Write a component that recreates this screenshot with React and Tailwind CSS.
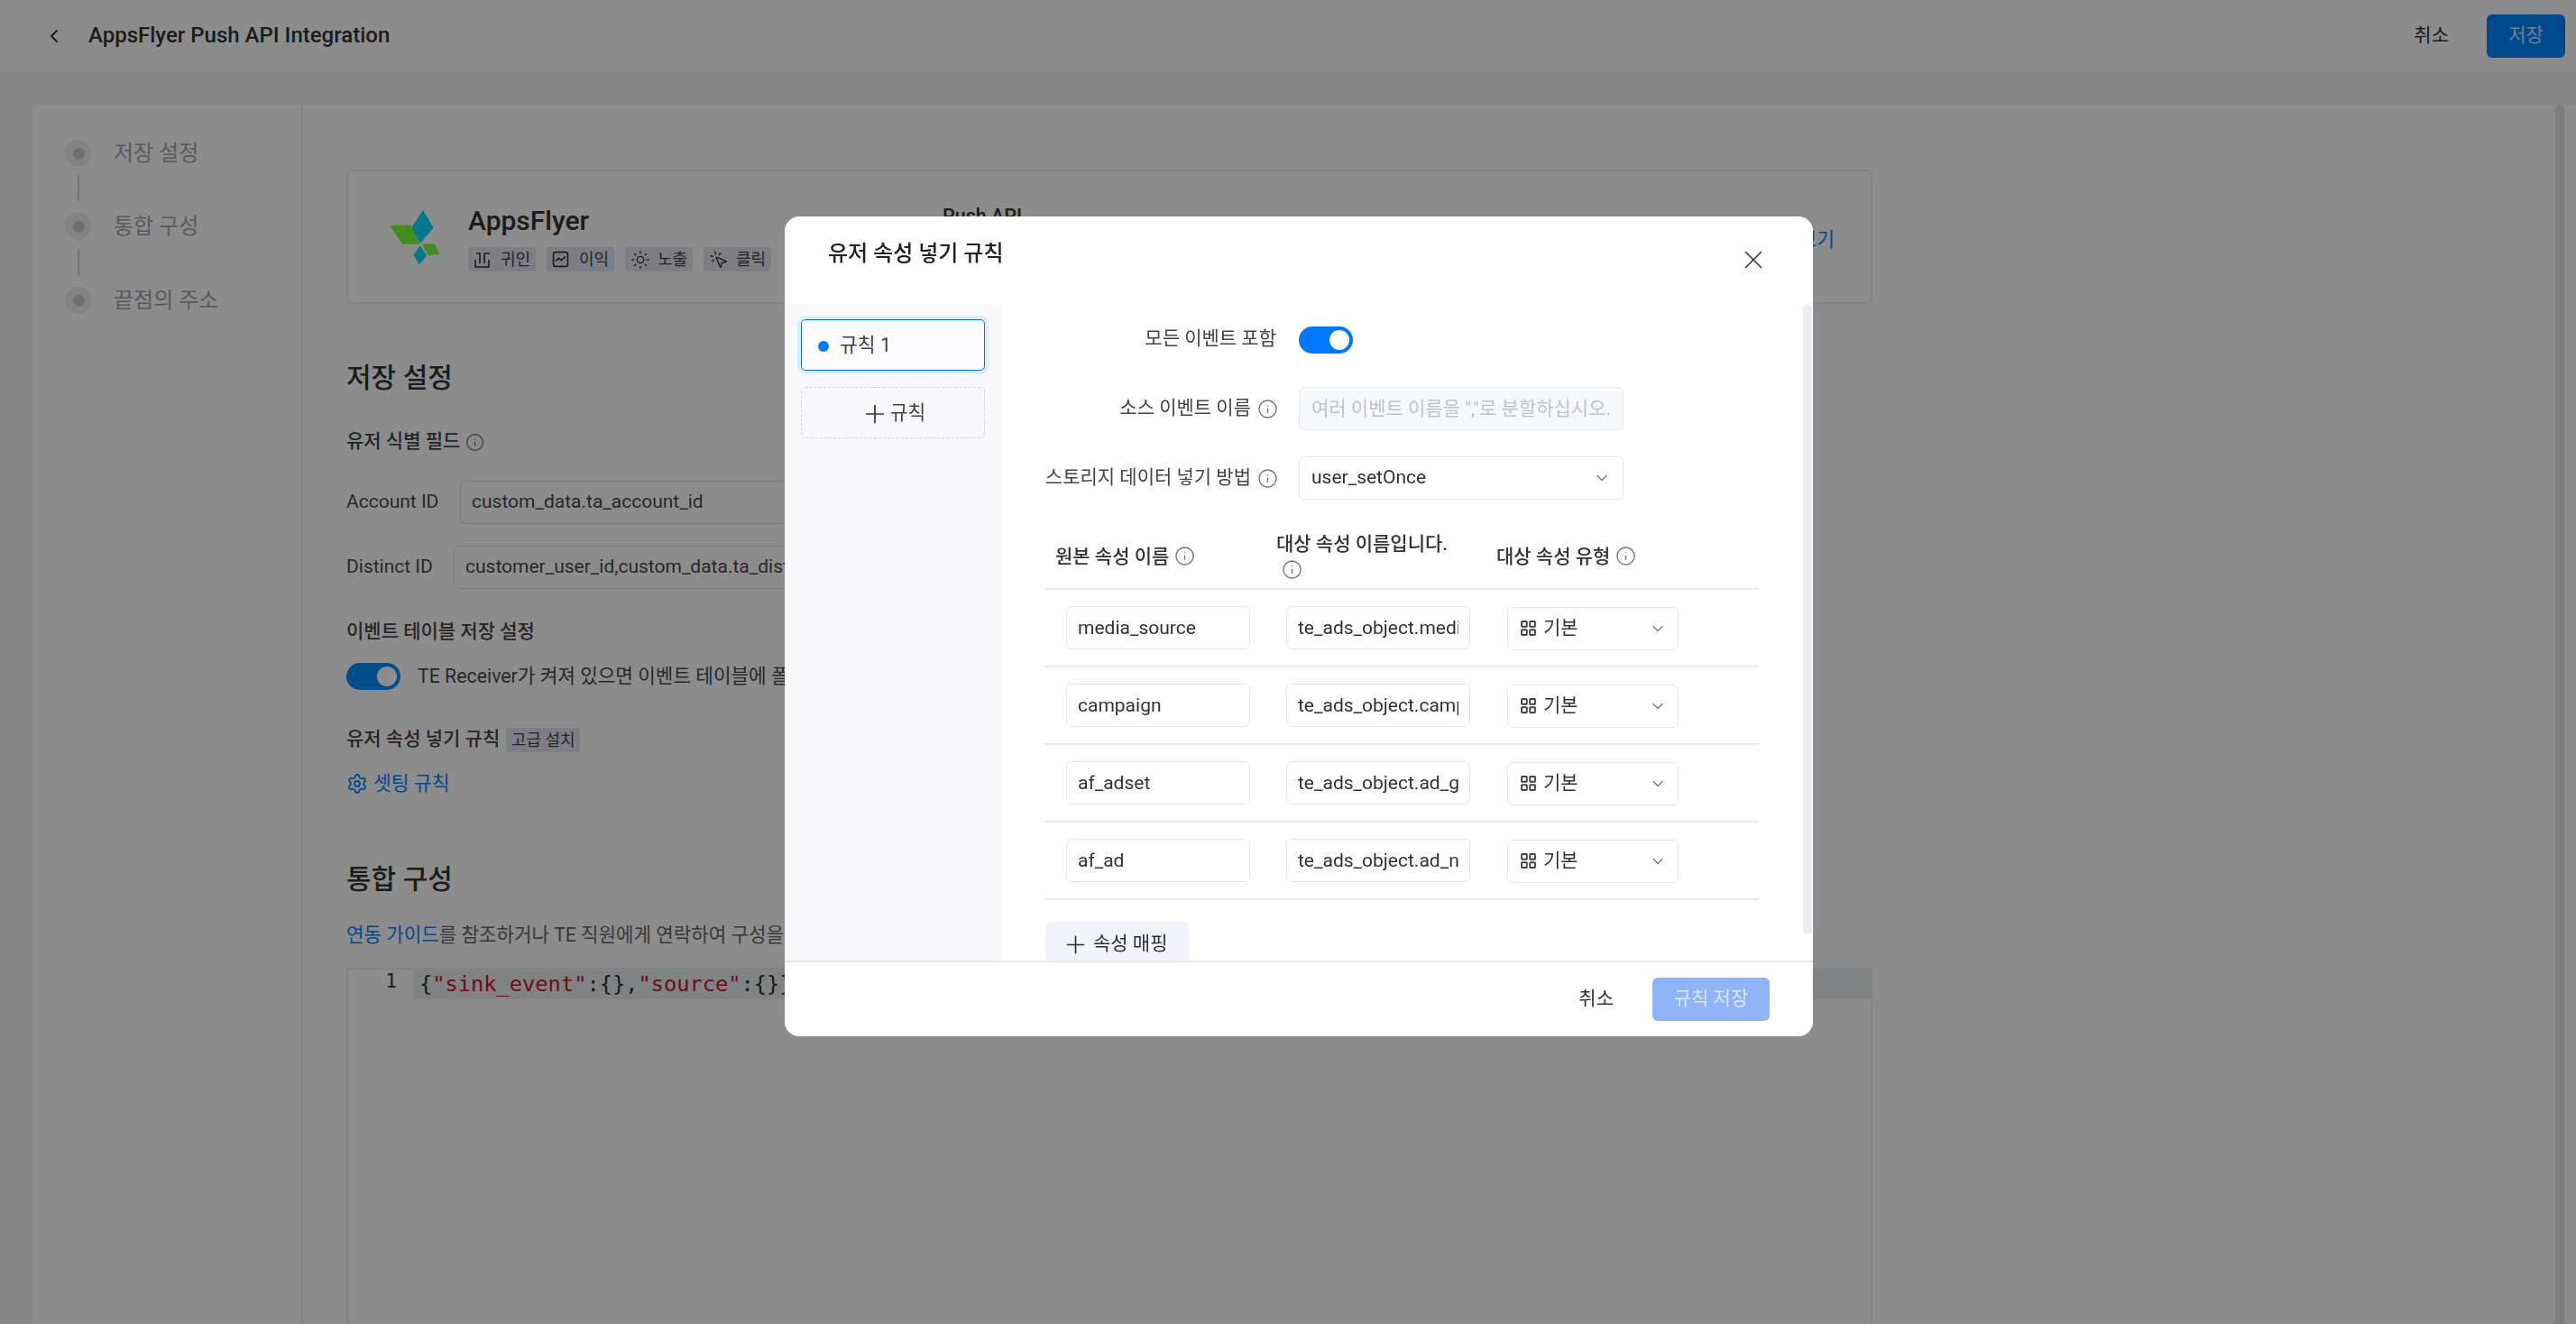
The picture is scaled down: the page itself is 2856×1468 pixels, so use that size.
import React from 'react';
import { ChevronLeft, ChevronDown, Info, Plus, X, Settings, Sun, MousePointerClick } from 'lucide-react';

const InfoIcon = ({ className = '', size = 23 }) => <Info size={size} strokeWidth={1.5} className={`shrink-0 text-[#777] ${className}`} />;

const Toggle = ({ color }) => (
  <div className={`flex items-center justify-end w-[60px] h-[30px] rounded-full pr-1 shrink-0 ${color}`}>
    <div className="w-[22px] h-[22px] rounded-full bg-white" />
  </div>
);

const Step = ({ label }) => (
  <div className="flex items-center h-[30px]">
    <div className="w-[30px] h-[30px] rounded-full bg-[#ecf0f3] flex items-center justify-center shrink-0">
      <div className="w-[13px] h-[13px] rounded-full bg-[#c6cace]" />
    </div>
    <span className="ml-[24px] text-[24px] text-[#a2a5ab] whitespace-nowrap">{label}</span>
  </div>
);

const Tag = ({ icon, label }) => (
  <div className="flex items-center h-[27px] w-[75px] rounded-[3px] bg-[#e4e8f0] pl-[6px] text-[18px] text-[#444]">
    <span className="w-[23px] h-[22px] flex items-center shrink-0">{icon}</span>
    <span className="ml-[7px] whitespace-nowrap">{label}</span>
  </div>
);

const Field = ({ label, value, indent }) => (
  <div className="flex items-center h-[48px]">
    <span className={`${indent} shrink-0 text-[21px] text-[#4a4a4a]`}>{label}</span>
    <div className="ml-0 w-[600px] h-[48px] rounded-[6px] border border-[#e0e2e6] pl-[12px] flex items-center text-[21px] text-[#4a4a4a] whitespace-nowrap overflow-hidden">{value}</div>
  </div>
);

const ModalInput = ({ value, width }) => (
  <input readOnly value={value} className={`${width} h-[48px] rounded-[6px] border border-[#e6e7ea] bg-white px-[12px] text-[21px] text-[#333] outline-none`} />
);

const TypeSelect = () => (
  <div className="mt-[1px] flex items-center w-[190px] h-[48px] rounded-[6px] border border-[#e6e7ea] bg-white pl-[14px] pr-[12px] text-[21px] text-[#333]">
    <svg width="17" height="17" viewBox="0 0 16 16" fill="none" stroke="#444" strokeWidth="1.8" className="shrink-0">
      <rect x="1" y="1" width="5.4" height="5.4" rx="0.6" />
      <rect x="9.6" y="1" width="5.4" height="5.4" rx="0.6" />
      <rect x="1" y="9.6" width="5.4" height="5.4" rx="0.6" />
      <rect x="9.6" y="9.6" width="5.4" height="5.4" rx="0.6" />
    </svg>
    <span className="ml-[8px]">기본</span>
    <ChevronDown size={20} strokeWidth={1.5} className="ml-auto text-[#777]" />
  </div>
);

const rows = [
  ['media_source', 'te_ads_object.media_source'],
  ['campaign', 'te_ads_object.campaign'],
  ['af_adset', 'te_ads_object.ad_group_name'],
  ['af_ad', 'te_ads_object.ad_name'],
];

const Modal = () => (
  <div className="fixed left-[870px] top-[240px] w-[1140px] h-[909px] bg-white rounded-[16px] flex flex-col overflow-hidden">
    <div className="h-[97px] shrink-0 flex justify-between pl-[48px] pr-[49px]">
      <span className="mt-[22px] text-[24px] leading-[38px] font-medium text-[#222]">유저 속성 넣기 규칙</span>
      <X size={34} strokeWidth={1.1} className="mt-[31px] text-[#333]" />
    </div>
    <div className="relative flex-1 flex min-h-0">
      <div className="w-[240px] shrink-0 bg-[#f9f9fb] rounded-tr-[6px] pt-[17px] px-[18px]">
        <div className="flex items-center h-[57px] rounded-[5px] border-[1.5px] border-[#0a6fdc] bg-[#fbfbfd] ring-4 ring-[#dcecff] pl-[18px] pt-[2px] text-[21.5px] text-[#444]">
          <span className="w-[12px] h-[12px] rounded-full bg-[#0077ff]" />
          <span className="ml-[12px]">규칙 1</span>
        </div>
        <div className="mt-[18px] flex items-center justify-center h-[57px] rounded-[5px] border border-dashed border-[#d4d5da] pt-[2px] text-[21.5px] text-[#444]">
          <Plus size={32} strokeWidth={1.3} className="text-[#333]" />
          <span className="ml-[1px]">규칙</span>
        </div>
      </div>
      <div className="flex-1 min-w-0 overflow-hidden pt-[25px] pl-[49px]">
        <div className="flex h-[30px]">
          <div className="w-[256px] flex items-center justify-end text-[21px] text-[#444] leading-[26px] pb-[4px]">모든 이벤트 포함</div>
          <div className="ml-[25px]"><Toggle color="bg-[#0077ff]" /></div>
        </div>
        <div className="mt-[37px] flex h-[48px]">
          <div className="w-[256px] flex items-center justify-end text-[21px] text-[#444]"><span>소스 이벤트 이름</span><InfoIcon className="ml-[7px] mr-[-2px]" /></div>
          <input disabled placeholder={'여러 이벤트 이름을 ","로 분할하십시오.'} className="ml-[25px] w-[360px] h-[48px] rounded-[6px] border border-[#ebecef] bg-[#f7f8fa] px-[13px] text-[21px] placeholder:text-[#c0c2c7]" />
        </div>
        <div className="mt-[29px] flex h-[48px]">
          <div className="w-[256px] flex items-center justify-end text-[21px] text-[#444] whitespace-nowrap"><span>스토리지 데이터 넣기 방법</span><InfoIcon className="ml-[7px] mr-[-2px]" /></div>
          <div className="ml-[25px] w-[360px] h-[48px] rounded-[6px] border border-[#e6e7ea] pl-[13px] pr-[13px] flex items-center text-[21px] text-[#333]">
            <span>user_setOnce</span>
            <ChevronDown size={20} strokeWidth={1.5} className="ml-auto text-[#777]" />
          </div>
        </div>
        <div className="mt-[27px] w-[791px] grid grid-cols-[245px_244px_1fr] h-[73px] border-b-2 border-[#e8e9ec] font-medium text-[21px] text-[#333] leading-[28px]">
          <div className="pl-[11px] flex items-center"><span>원본 속성 이름</span><InfoIcon className="ml-[6px]" /></div>
          <div className="pl-[11px] pt-[8px]">
            <div className="whitespace-nowrap">대상 속성 이름입니다.</div>
            <div className="pl-[6px] h-[28px] flex items-center"><InfoIcon /></div>
          </div>
          <div className="pl-[11px] flex items-center"><span>대상 속성 유형</span><InfoIcon className="ml-[6px]" /></div>
        </div>
        {rows.map(([a, b]) => (
          <div key={a} className="w-[791px] grid grid-cols-[245px_244px_1fr] h-[86px] border-b-2 border-[#e8e9ec] items-center">
            <div className="pl-[23px]"><ModalInput value={a} width="w-[204px]" /></div>
            <div className="pl-[22px]"><ModalInput value={b} width="w-[204px]" /></div>
            <div className="pl-[23px]"><TypeSelect /></div>
          </div>
        ))}
        <div className="mt-[24px] w-[159px] h-[50px] rounded-t-[6px] bg-[#f2f3f8] flex items-center pl-[18px] text-[#2b2d42] text-[21px] whitespace-nowrap">
          <Plus size={31} strokeWidth={1.3} />
          <span className="ml-[4px]">속성 매핑</span>
        </div>
      </div>
      <div className="absolute right-[1px] top-0 w-[10px] h-[699px] rounded-full bg-[#ecedf1]" />
    </div>
    <div className="h-[84px] shrink-0 border-t-2 border-[#e8e9ec] flex items-center justify-end pr-[48px]">
      <span className="text-[21px] text-[#333]">취소</span>
      <div className="ml-[43px] w-[130px] h-[48px] rounded-[6px] bg-[#8fb4f8] flex items-center justify-center text-[21px] text-[#dce8ff]">규칙 저장</div>
    </div>
  </div>
);

export default function App() {
  return (
    <div className="relative h-[1468px] w-[2856px] overflow-hidden bg-[#f2f2f3] font-[Roboto,'Noto_Sans_CJK_KR',sans-serif]">
      <header className="h-20 bg-white flex items-center pl-[48px] pr-3">
        <ChevronLeft size={24} strokeWidth={2} className="text-[#333]" />
        <span className="ml-[26px] pb-[2px] text-[24px] font-medium text-[#333]">AppsFlyer Push API Integration</span>
        <span className="ml-auto text-[21px] text-[#333]">취소</span>
        <div className="ml-[42px] w-[87px] h-[48px] rounded-[6px] bg-[#0086ff] flex items-center justify-center text-[21px] text-[#cde4ff]">저장</div>
      </header>
      <main className="mt-9 ml-9 flex bg-white h-[1352px]">
        <aside className="w-[300px] shrink-0 border-r-2 border-[#eceef0] pt-[39px] pl-9">
          <Step label="저장 설정" />
          <div className="ml-[14px] w-[2px] h-[29px] mt-[9px] mb-[13px] bg-[#d4d6da]" />
          <Step label="통합 구성" />
          <div className="ml-[14px] w-[2px] h-[30px] mt-[10px] mb-[12px] bg-[#d4d6da]" />
          <Step label="끝점의 주소" />
        </aside>
        <section className="pl-[48px] w-[1740px] shrink-0 pt-[72px]">
          <div className="h-[149px] rounded-[6px] border-2 border-[#eceef0] flex">
            <svg width="60" height="66" viewBox="0 0 60 66" className="ml-[44px] mt-[40px] shrink-0">
              <polygon points="39,2.7 50.7,22.7 35.7,40 26,22.7" fill="#07dfff" />
              <polygon points="2.3,20 25,19.3 35,40.7 16,40.7" fill="#7fff38" />
              <polygon points="37.7,40.7 51.7,40 57.7,52.3 45,53.3" fill="#7fff38" />
              <polygon points="35.7,42.3 43.3,53.3 35,63.3 28.3,52.7" fill="#07dfff" />
            </svg>
            <div className="ml-[29px] w-[526px] shrink-0 pt-[36px]">
              <div className="text-[30px] leading-[38px] font-medium text-[#333]">AppsFlyer</div>
              <div className="mt-[10px] flex gap-3">
                <Tag label="귀인" icon={<svg width="20" height="20" viewBox="0 0 20 20" fill="none" stroke="#333" strokeWidth="1.6"><path d="M2 10v8h15v-8M7 14V3H3M12 14V3h6" /></svg>} />
                <Tag label="이익" icon={<svg width="19" height="19" viewBox="0 0 18 18" fill="none" stroke="#333" strokeWidth="1.6"><rect x="1.5" y="1.5" width="15" height="15" rx="2" /><path d="M4 11l3-3 3 2 4-4" /></svg>} />
                <Tag label="노출" icon={<Sun size={22} strokeWidth={1.5} color="#333" />} />
                <Tag label="클릭" icon={<MousePointerClick size={22} strokeWidth={1.5} color="#333" />} />
              </div>
            </div>
            <div className="pt-[34px] text-[21.5px] font-medium text-[#333]">Push API</div>
            <div className="ml-auto pr-[40px] pt-[60px] text-[21.5px] text-[#0a84ff] whitespace-nowrap">가이드 보기</div>
          </div>
          <h2 className="mt-[62px] text-[30px] leading-[40px] font-medium text-[#333]">저장 설정</h2>
          <div className="mt-[37px] h-[28px] flex items-center text-[21px] font-medium text-[#444]"><span>유저 식별 필드</span><InfoIcon size={21} className="ml-[6px] text-[#666]" /></div>
          <div className="mt-[29px]"><Field label="Account ID" value="custom_data.ta_account_id" indent="w-[126px]" /></div>
          <div className="mt-[24px]"><Field label="Distinct ID" value="customer_user_id,custom_data.ta_distinct_id" indent="w-[119px]" /></div>
          <div className="mt-[34px] h-[28px] flex items-center text-[21px] font-medium text-[#444]">이벤트 테이블 저장 설정</div>
          <div className="mt-[20px] flex items-center h-[30px]">
            <Toggle color="bg-[#0091ff]" />
            <span className="ml-[19px] text-[21.3px] text-[#4a4a4a] whitespace-nowrap">TE Receiver가 켜져 있으면 이벤트 테이블에 폴더를 저장합니다</span>
          </div>
          <div className="mt-[41px] h-[28px] flex items-center text-[21px] font-medium text-[#444]">
            <span>유저 속성 넣기 규칙</span>
            <span className="ml-[7px] h-[27px] w-[82px] rounded-[3px] bg-[#e4e8f0] flex items-center justify-center text-[18px] font-normal text-[#444]">고급 설치</span>
          </div>
          <div className="mt-[21px] h-[28px] flex items-center text-[21.5px] text-[#0a84ff]">
            <Settings size={24} strokeWidth={1.8} />
            <span className="ml-[6px]">셋팅 규칙</span>
          </div>
          <h2 className="mt-[72px] text-[30px] leading-[40px] font-medium text-[#333]">통합 구성</h2>
          <p className="mt-[28px] leading-[28px] text-[21.2px] text-[#666] whitespace-nowrap"><span className="text-[#0a84ff]">연동 가이드</span>를 참조하거나 TE 직원에게 연락하여 구성을 완료하세요</p>
          <div className="mt-[22px] h-[420px] border-2 border-[#eceef0] flex">
            <div className="w-[72px] h-[33px] shrink-0 flex justify-end pr-[18px] font-['DejaVu_Sans_Mono',monospace] text-[21px] text-[#333] leading-[26px]">1</div>
            <div className="flex-1 h-[33px] bg-[#e9eef0] pl-[7px] font-['DejaVu_Sans_Mono',monospace] text-[23.7px] leading-[33px] text-[#333] whitespace-nowrap">
              {'{'}<span className="text-[#c8142a]">"sink_event"</span>:{'{}'},<span className="text-[#c8142a]">"source"</span>:{'{}}'}
            </div>
          </div>
        </section>
      </main>
      <div className="absolute left-[2833px] top-[116px] w-[10px] h-[1352px] rounded-t-full bg-[#e2e5e8]" />
      <div className="fixed inset-0 bg-black/45" />
      <Modal />
    </div>
  );
}
